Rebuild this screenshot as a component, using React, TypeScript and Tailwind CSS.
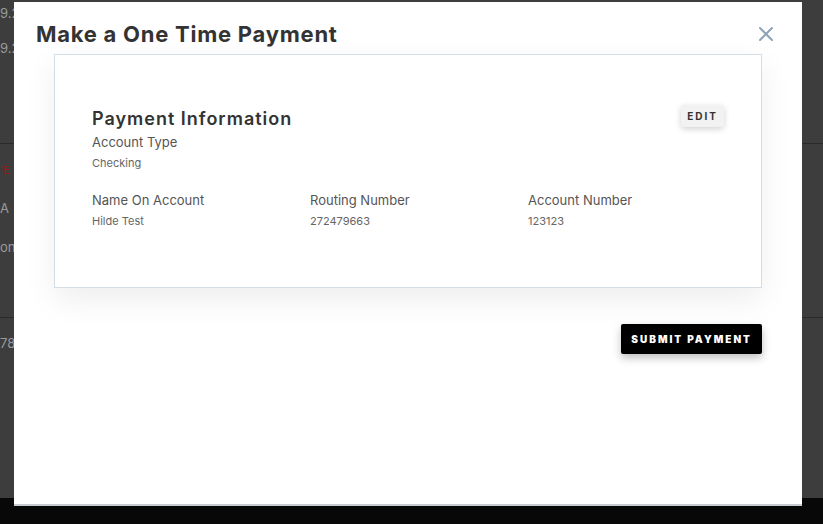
const font = { fontFamily: 'Inter, "Open Sans", sans-serif' }

function Field({ label, value }: { label: string; value: string }) {
  return (
    <div className="w-[218px] shrink-0">
      <p className="text-[13px] leading-[18px] text-[#555]">{label}</p>
      <p className="mt-[4px] text-[11px] leading-[16px] text-[#666]">{value}</p>
    </div>
  )
}

export default function App() {
  return (
    <div style={font} className="relative h-[524px] w-[823px] overflow-hidden bg-[#3d3d3d]">
      {/* page behind the overlay */}
      <div className="flex h-[498px] flex-col text-[13px] text-[#9a9a9a]">
        <p className="mt-[5px] leading-[16px]">9.2</p>
        <p className="mt-[19px] leading-[16px]">9.2</p>
        <div className="mt-[87px] border-t border-[#2a2a2a]" />
        <p className="mt-[18px] text-[11px] leading-[16px] text-[#8e1f1f]">'E</p>
        <p className="mt-[22px] leading-[16px]">A</p>
        <p className="mt-[23px] leading-[16px]">ont</p>
        <div className="mt-[62px] border-t border-[#2a2a2a]" />
        <p className="mt-[17px] leading-[16px]">78.</p>
      </div>
      <div className="h-[26px] bg-[#080808]" />

      {/* modal */}
      <div className="absolute left-[14px] top-[2px] h-[504px] w-[788px] border-b-2 border-[#c9cdd2] bg-white">
        <div className="flex items-start justify-between pl-[22px] pr-[29px] pt-[18px]">
          <h1 className="text-[22px] font-bold leading-[28px] tracking-[0.75px] text-[#333]">Make a One Time Payment</h1>
          <button className="mt-[7px] text-[#8da2b5]">
            <svg width="14" height="14" viewBox="0 0 14 14" fill="none" stroke="currentColor" strokeWidth="2" strokeLinecap="round">
              <path d="M1 1 L13 13 M13 1 L1 13" />
            </svg>
          </button>
        </div>

        <section className="mx-[40px] mt-[6px] h-[234px] border border-[#d5dde5] bg-white px-[37px] pt-[53px] shadow-[0_12px_30px_rgba(0,0,0,0.07)]">
          <div className="flex items-start justify-between">
            <h2 className="text-[18px] font-semibold leading-[22px] tracking-[1px] text-[#333]">Payment Information</h2>
            <button className="mt-[-3px] rounded-[3px] bg-[#f2f2f2] px-[6px] py-[5px] text-[10px] font-bold leading-[12px] tracking-[2px] text-[#333] shadow-[0_2px_6px_rgba(0,0,0,0.18)]">
              EDIT
            </button>
          </div>
          <div className="mt-[3px]">
            <Field label="Account Type" value="Checking" />
          </div>
          <div className="mt-[20px] flex">
            <Field label="Name On Account" value="Hilde Test" />
            <Field label="Routing Number" value="272479663" />
            <Field label="Account Number" value="123123" />
          </div>
        </section>

        <div className="mr-[40px] mt-[36px] flex justify-end">
          <button className="h-[30px] rounded-[2px] bg-black px-[10px] text-[10px] font-black tracking-[2px] text-white shadow-[0_4px_8px_rgba(0,0,0,0.25)]">
            SUBMIT PAYMENT
          </button>
        </div>
      </div>
    </div>
  )
}
